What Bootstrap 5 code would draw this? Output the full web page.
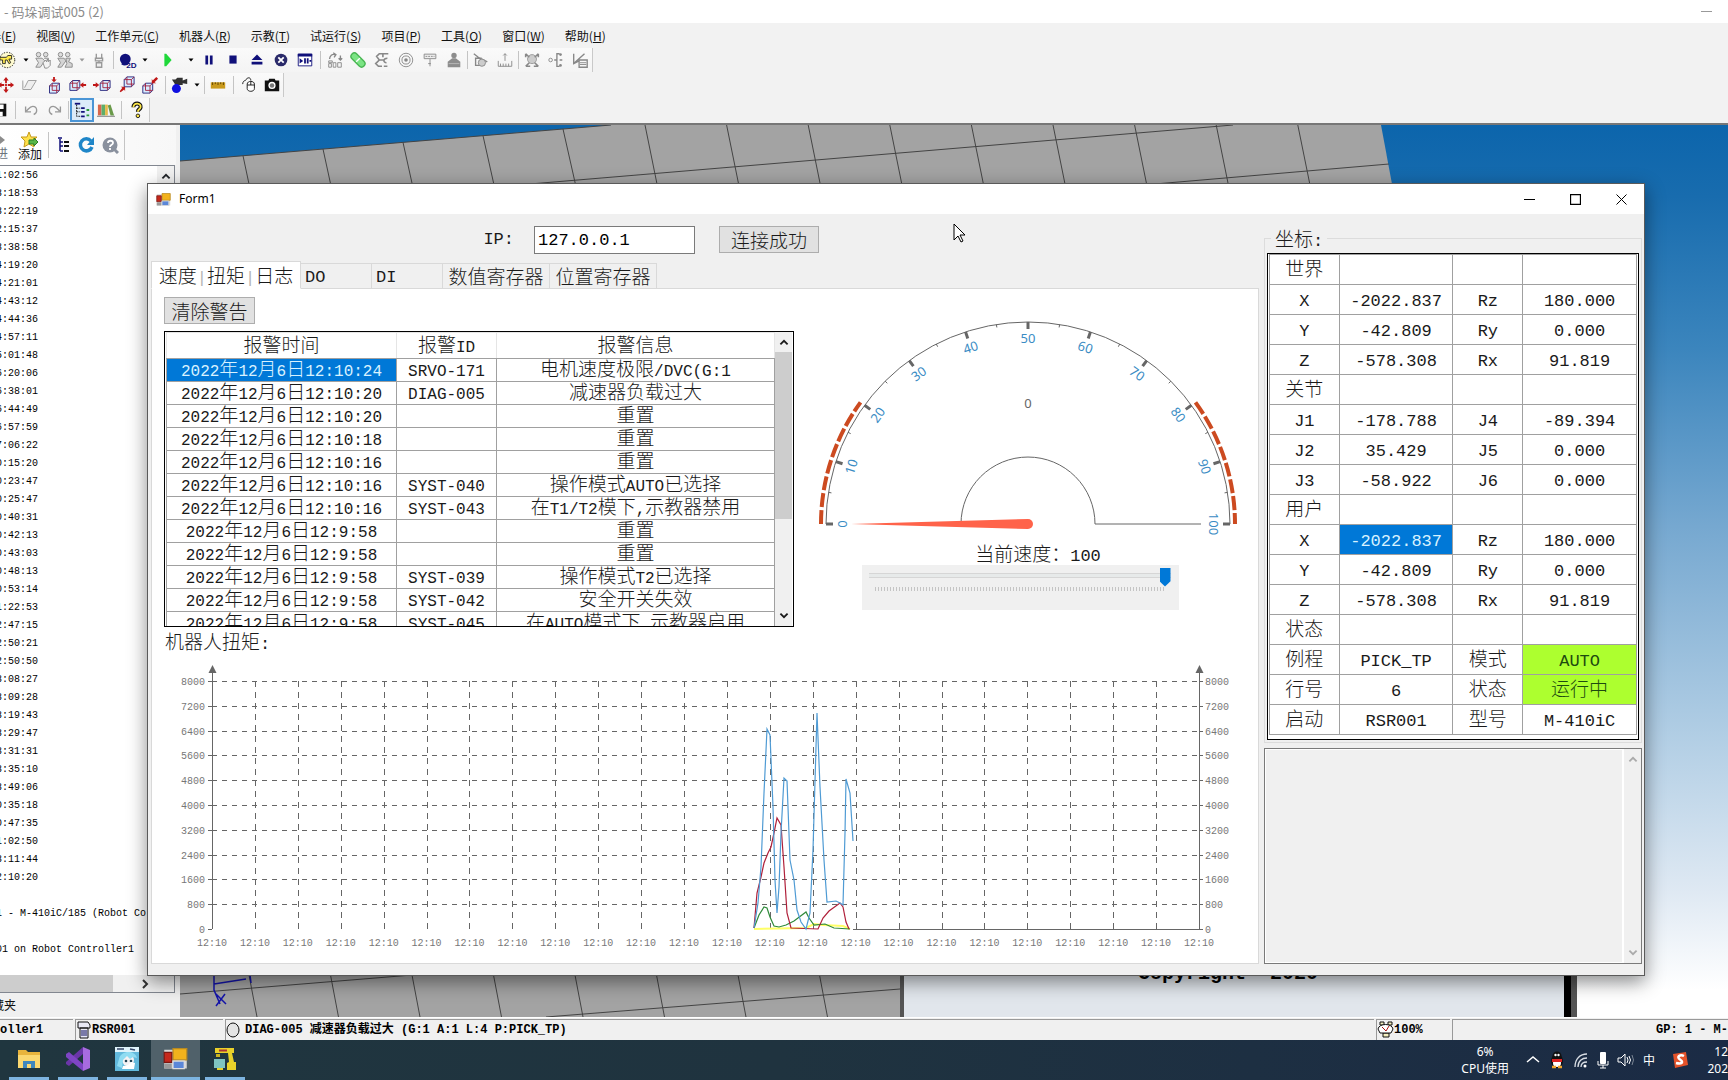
<!DOCTYPE html>
<html lang="zh-CN">
<head>
<meta charset="utf-8">
<meta name="viewport" content="width=device-width, initial-scale=1">
<title>Form1</title>
<link href="https://cdn.jsdelivr.net/npm/bootstrap@5.3.0/dist/css/bootstrap.min.css" rel="stylesheet">
<style>
:root{--sim:"Liberation Mono","Noto Sans CJK SC",monospace;--cjk:"Noto Sans CJK SC",sans-serif;--ui:"Noto Sans","Noto Sans CJK SC",sans-serif}
body{font-family:var(--cjk);font-size:12px;color:#111;height:100vh;overflow:hidden;background:#f2f2f2}
button{font:inherit;color:inherit;background:none;border:0;padding:0}
svg{display:block;flex:none}
/* host application */
.app-title{height:23px;color:#8c8c8c;font-size:13px;line-height:20px;background:#fff}
.app-menu{height:25px;gap:20px;margin-left:-11px;font-size:12px}
.tool-strip{width:max-content;height:24px;margin-bottom:1px;background:linear-gradient(#fafafa,#f4f4f4);border-right:1px solid #c9c9c9}
.tb{width:24px;height:24px;display:flex;align-items:center;justify-content:center}
.tb.narrow{width:22px}.tb.wide{width:34px}
.tb.drop{width:12px}
.tb.on{border:2px solid #4a95d6;background:#dcecf9}
.vsep{width:1px;height:18px;background:#c4c4c4;margin:0 3px}
.vsep.tight{margin:0 1px}
.app-line{border-top:2px solid #777}
.side{width:180px;background:#f0f0f0;border-right:4px solid #f0f0f0}
.side-tools{height:40px;background:linear-gradient(90deg,#fff,#f7f7f7)}
.log-box{border:1px solid #828790;border-left:0;background:#fff;margin-right:1px}
.log-list{font:10px/18px var(--sim);color:#000;margin-left:-4px;padding-top:1px;white-space:pre}
.vbar{width:17px;background:#f0f0f0}
.hbar{height:17px;background:#f0f0f0}
.hbar-thumb{width:65%;background:#cdcdcd}
.side-tab{height:24px;font-size:12px}
.status{height:23px;background:#f0f0f0;border-top:1px solid #fff;font:bold 12px/20px var(--sim);color:#000;white-space:nowrap}
.pane-cell{border-top:1px solid #999;border-left:1px solid #999;height:21px;margin-right:2px}
.taskbar{height:40px;background:linear-gradient(90deg,#20363f,#1f333f 45%,#1b2b45);color:#fff;font:12px/17px var(--ui)}
.task{width:49px;height:40px;padding:0 4px 0 5px}
.task span{display:flex;align-items:center;justify-content:center;height:40px;border-bottom:3px solid #7db4e0}
.task.now{background:#50616a;padding:0}
/* monitor form */
.form-win{left:147px;right:83px;top:183px;border:1px solid #5a5a5a;background:#f0f0f0;box-shadow:0 6px 18px rgba(0,0,0,.45);font:300 19px/24px var(--cjk);color:#1a1a1a}
.form-title{height:30px;background:#fff;font:12px/30px var(--ui);color:#000}
.cap{width:46px;height:30px;display:flex;align-items:center;justify-content:center}
.lat{font-family:var(--sim);font-size:17px;font-weight:400}
span.lat{line-height:0}
.form-body{gap:5px;padding:0 3px 11px}
.ip-bar{height:47px;padding:12px 0 0 30%}
.ip-bar label{padding-top:2px}
.ip-box{width:161px;height:28px;margin-left:20px;border:1px solid #7a7a7a;border-radius:0;padding:0 3px;background:#fff}
.win-btn{height:27px;border:1px solid #adadad;background:#e1e1e1;line-height:24px;padding:0 6px;font-size:19px}
.tab-list{height:28px;margin-bottom:-1px;position:relative;align-items:flex-end}
.tab-list button{height:26px;border:1px solid #d9d9d9;border-left-width:0;line-height:24px;padding:0 4px;text-align:left;white-space:nowrap}
.tab-list button.now{height:28px;width:150px;background:#fff;border-left-width:1px;border-bottom-color:#fff;padding:0 6px;font-size:19px;text-align:center}
.tab-list .short{width:71px;line-height:28px}
.tab-list .long{width:107px;text-align:center}
.bar-mark{color:#b5b5b5}
.page{background:#fff;border:1px solid #d9d9d9}
.page-label{padding:2px 0 2px 13px}
.alarm-col{width:630px;margin-left:12px;padding-top:8px}
.grid-frame{border:1px solid #000;background:#fff;padding:0 1px}
.alarm-frame{height:296px;margin-top:7px;overflow:hidden}
.table.dgv{table-layout:fixed;margin:0;color:#1a1a1a;font-weight:300;border-color:#a0a0a0}
.table.dgv>:not(caption)>*>*{padding:0;border:1px solid #a0a0a0;text-align:center;vertical-align:top;white-space:nowrap;overflow:hidden;font-weight:300}
.table.alarm>:not(caption)>*>*{height:23px;line-height:18px;font-size:19px}
.table.alarm>thead>*>*{height:26px;line-height:22px;border-color:#e5e5e5;border-bottom-color:#a0a0a0}
.alarm .lat{font-size:16px}
.table.coord>:not(caption)>*>*{height:30px;line-height:26px}
.table.dgv .sel{background:#0078d7;color:#d8f2ff}
.table.dgv .go{background:#adff2f;color:#1d4a10}
.scroll-col{width:17px;background:#f0f0f0}
.scroll-thumb{height:167px;background:#cdcdcd}
.speed{width:317px;height:45px;background:#f0f0f0;margin-right:12px}
.speed input{appearance:none;-webkit-appearance:none;display:block;width:302px;height:20px;margin:2px 0 0 7px;background:linear-gradient(#d6d6d6,#d6d6d6) 0 6px/100% 1px no-repeat,linear-gradient(#e7eaea,#e7eaea) 0 7px/100% 3px no-repeat,linear-gradient(#d6d6d6,#d6d6d6) 0 10px/100% 1px no-repeat}
.speed input::-webkit-slider-thumb{-webkit-appearance:none;width:11px;height:19px;background:#0078d7;clip-path:polygon(0 0,100% 0,100% 72%,50% 100%,0 72%)}
.ticks{height:4px;margin:0 13px;width:291px;background:repeating-linear-gradient(90deg,#c4c4c4 0 1px,transparent 1px 3px)}
.right-col{width:378px}
.coord-set{border:1px solid #dcdcdc;margin:12px 0 5px;padding:0 2px 2px}
.coord-set legend{float:none;width:auto;font-size:19px;line-height:24px;padding:0 4px;margin:0 0 3px 4px}
.coord-frame{padding-bottom:4px}
.msg{height:216px;border:1px solid #7a7a7a}
.msg textarea{border:1px solid #fff;background:#f0f0f0;resize:none;outline:0}
.msg .scroll-col{width:18px;border-left:1px solid #fff}
.pointer{left:953px;top:223px}
svg .axis{font:10px var(--sim);fill:#777}
svg .dial{font:13px var(--ui);fill:#3a8cc4;text-anchor:middle}
</style>
<script src="https://cdn.jsdelivr.net/npm/bootstrap@5.3.0/dist/js/bootstrap.bundle.min.js"></script>
</head>
<body class="d-flex flex-column position-relative">

<svg width="0" height="0" class="position-absolute" aria-hidden="true">
<defs>
<symbol id="i-drop" viewBox="0 0 20 20"><path d="M5 7h10l-5 6z" fill="#000"/></symbol>
<symbol id="i-dropg" viewBox="0 0 20 20"><path d="M5 7h10l-5 6z" fill="#999"/></symbol>
<symbol id="i-teach" viewBox="0 0 20 20"><circle cx="9" cy="10" r="8.500" fill="#fffbd0" stroke="#000" stroke-dasharray="1.500 1.500"/><path d="M1 7h7l2-2h4v4h-3l2 4-2 1-2-4H7v4H4v-4H1z" fill="#ffe94a" stroke="#222"/></symbol>
<symbol id="i-people" viewBox="0 0 20 20"><circle cx="5" cy="4" r="2.500" fill="#ddd" stroke="#888"/><circle cx="13" cy="4" r="2.500" fill="#ddd" stroke="#888"/><path d="M2 8h7l3 3-5 7H2l3-5zM11 8h5v3" fill="#ddd" stroke="#888"/><path d="M10 13l3-3 1 2 1-3 1 3 2-2v6l-3 3h-3z" fill="#f4f4f4" stroke="#888"/></symbol>
<symbol id="i-people2" viewBox="0 0 20 20"><circle cx="5" cy="4" r="2.500" fill="#ddd" stroke="#888"/><circle cx="13" cy="4" r="2.500" fill="#ddd" stroke="#888"/><path d="M2 8h7l2 3-5 7H2l3-5zM11 8h5l-2 4 4 2v4h-8l2-4z" fill="#d4d4d4" stroke="#888"/></symbol>
<symbol id="i-clamp" viewBox="0 0 20 20"><path d="M7 3v5M13 3v5M6 8h8v3H6zM10 11v2M7 13h6v5H7z" fill="#eee" stroke="#999" stroke-width="1.500"/></symbol>
<symbol id="i-ball" viewBox="0 0 20 20"><circle cx="7" cy="9" r="6" fill="#10107a"/><path d="M3 14c3 2 6 1 8-1" stroke="#10107a" fill="none" stroke-width="2"/><text x="8" y="19" font-size="9" font-family="Liberation Sans" font-weight="bold" fill="#10107a">2D</text></symbol>
<symbol id="i-play" viewBox="0 0 20 20"><path d="M6 3h2l6 7-6 7H6z" fill="#1fd83a"/></symbol>
<symbol id="i-pause" viewBox="0 0 20 20"><path d="M6 5h3v10H6zM11 5h3v10h-3z" fill="#10107a"/></symbol>
<symbol id="i-stop" viewBox="0 0 20 20"><path d="M6 5h8v9H6z" fill="#10107a"/></symbol>
<symbol id="i-eject" viewBox="0 0 20 20"><path d="M10 4l6 6H4zM4 12h12v3H4z" fill="#10107a"/></symbol>
<symbol id="i-kill" viewBox="0 0 20 20"><circle cx="10" cy="10" r="7" fill="#2a2a6a"/><path d="M7 7l6 6M13 7l-6 6" stroke="#fff" stroke-width="2"/></symbol>
<symbol id="i-step" viewBox="0 0 20 20"><path d="M2.500 3.500h15v13h-15z" fill="#fff" stroke="#10107a"/><path d="M2 3h16v3H2zM4 8l4 3-4 3zM9 8h2v6H9zM12 8h2v6h-2zM15 10h2v2h-2z" fill="#10107a"/></symbol>
<symbol id="i-parts" viewBox="0 0 20 20"><path d="M4 9c0-4 3-6 6-5M8 2l3 2-2 3M16 5v4M14 8l2 2 2-2" fill="none" stroke="#888" stroke-width="1.500"/><path d="M3 11h4v2H3zM3 14h3v4H3zM8 13h3v5H8zM13 13h4v5h-4z" fill="none" stroke="#888"/></symbol>
<symbol id="i-chain" viewBox="0 0 20 20"><path d="M6 6l8 8" stroke="#49b553" stroke-width="9" stroke-linecap="round"/><path d="M6 6l8 8" stroke="#7be484" stroke-width="6" stroke-linecap="round"/><path d="M8 12l4-4" stroke="#fff" stroke-width="1.500"/></symbol>
<symbol id="i-arm" viewBox="0 0 20 20"><path d="M17 3H7L4 6l3 4h5M7 10l-4 4 3 3h4M16 8c-5 0-5 5-1 5M16 17h-4M11 3v4" fill="none" stroke="#888" stroke-width="1.800"/></symbol>
<symbol id="i-target" viewBox="0 0 20 20"><g fill="none" stroke="#888"><circle cx="10" cy="10" r="7.500"/><circle cx="10" cy="10" r="4.500"/></g><circle cx="10" cy="10" r="2" fill="#888"/></symbol>
<symbol id="i-board" viewBox="0 0 20 20"><path d="M3.500 3.500h13v5h-13zM10 9v8M8 14h3" fill="#eee" stroke="#888"/><path d="M5 6h10" stroke="#888" stroke-dasharray="2 1"/></symbol>
<symbol id="i-man" viewBox="0 0 20 20"><circle cx="10" cy="5" r="3" fill="#8d8d8d"/><path d="M8 8h4l5 4v6H3v-6z" fill="#8d8d8d"/><path d="M4 14h12" stroke="#bbb"/></symbol>
<symbol id="i-shape" viewBox="0 0 20 20"><path d="M2 3l5 4 10 5M4 8h6v8H4z" fill="none" stroke="#888" stroke-width="1.500"/><circle cx="11" cy="13" r="4" fill="#ccc" stroke="#888"/></symbol>
<symbol id="i-gauge" viewBox="0 0 20 20"><path d="M2.500 11v6h15v-6M5 14v3M8 14v3M11 14v3M14 14v3M10 11V3M8 5l2-2 2 2" fill="none" stroke="#888"/></symbol>
<symbol id="i-net" viewBox="0 0 20 20"><circle cx="10" cy="9" r="5" fill="#ccc" stroke="#999"/><path d="M3 3l4 4M17 3l-4 4M3 17l4-4M17 17l-4-4M3 3v4M17 3v4M3 17h5M17 17h-5" stroke="#888" stroke-width="1.800" fill="none"/></symbol>
<symbol id="i-link" viewBox="0 0 20 20"><circle cx="4" cy="10" r="2" fill="none" stroke="#888"/><path d="M8 10h3M14 3h-3v14h3M14 10h3" fill="none" stroke="#888" stroke-width="1.500"/><circle cx="15" cy="4" r="1.500" fill="#888"/><circle cx="15" cy="16" r="1.500" fill="#888"/></symbol>
<symbol id="i-plot" viewBox="0 0 20 20"><path d="M3 3v11l6-3M3 14L15 3M9 10h9v8H9z" fill="none" stroke="#888" stroke-width="1.500"/><path d="M10 13h7M10 15h7" stroke="#888"/></symbol>
<symbol id="i-move" viewBox="0 0 20 20"><path d="M10 1l3 4h-2v3H9V5H7zM10 19l3-4h-2v-3H9v3H7zM1 10l4-3v2h3v2H5v2zM19 10l-4-3v2h-3v2h3v2z" fill="#c01818"/><path d="M9 9h2v2H9z" fill="#c01818"/></symbol>
<symbol id="i-plane" viewBox="0 0 20 20"><path d="M2 5v10h9l6-10H8l-4 8" fill="#eee" stroke="#999"/></symbol>
<symbol id="i-cube" viewBox="0 0 20 20"><path d="M5 9l3-3h8v8l-3 3H5z" fill="#d8ecff" stroke="#22227a"/><path d="M5 9h8v8M13 9l3-3M8 6v8h8" fill="none" stroke="#a02040"/></symbol>
<symbol id="i-c1" viewBox="0 0 20 20"><use href="#i-cube" y="2"/><path d="M10 7l-3-3h2V1h2v3h2z" fill="#c01818"/></symbol>
<symbol id="i-c2" viewBox="0 0 20 20"><use href="#i-cube" x="-4" y="-1"/><path d="M12 10l4-3v2h3v2h-3v2z" fill="#c01818"/></symbol>
<symbol id="i-c3" viewBox="0 0 20 20"><use href="#i-cube" x="3" y="-1"/><path d="M7 10L3 7v2H0v2h3v2z" fill="#c01818"/></symbol>
<symbol id="i-c4" viewBox="0 0 20 20"><use href="#i-cube" x="3" y="-5"/><path d="M9 12v5l-1-2-4 3-1-1 3-4-2-1z" fill="#c01818"/></symbol>
<symbol id="i-c5" viewBox="0 0 20 20"><use href="#i-cube" x="-3" y="2"/><path d="M12 8V3l1 2 4-4 2 2-4 4 2 1z" fill="#c01818"/></symbol>
<symbol id="i-view" viewBox="0 0 20 20"><path d="M1 4h4l2-2h6v3l5-2v6l-5-1v2H5z" fill="#333"/><circle cx="6" cy="14" r="5" fill="#1010e0"/></symbol>
<symbol id="i-ruler" viewBox="0 0 20 20"><path d="M2 7h16v7H2z" fill="#c99a1c"/><path d="M4 7v3M7 7v2M10 7v3M13 7v2M16 7v3" stroke="#5a4000"/></symbol>
<symbol id="i-mouse" viewBox="0 0 20 20"><path d="M8 9c0-4 8-4 8 0v5c0 4-8 4-8 0zM8 10h8M12 6v4" fill="#fff" stroke="#111"/><path d="M3 9c0-3 2-4 3-4 2-4 6-4 6 0" fill="none" stroke="#111"/></symbol>
<symbol id="i-photo" viewBox="0 0 20 20"><path d="M2 5h4l1-2h6l1 2h4v12H2z" fill="#111"/><circle cx="10" cy="10.500" r="4" fill="#fff"/><circle cx="10" cy="10.500" r="2.500" fill="#777"/></symbol>
<symbol id="i-save" viewBox="0 0 20 20"><path d="M3 3h14v14H3z" fill="#111"/><path d="M6 4h8v5H6zM7 12h6v5H7z" fill="#fff"/><path d="M8 13h2v3H8z" fill="#111"/></symbol>
<symbol id="i-undo" viewBox="0 0 20 20"><path d="M13 15c5-2 4-9-1-9-3 0-4 2-7 5M4 6v6h6" fill="none" stroke="#999" stroke-width="1.500"/></symbol>
<symbol id="i-redo" viewBox="0 0 20 20"><path d="M7 15c-5-2-4-9 1-9 3 0 4 2 7 5M16 6v6h-6" fill="none" stroke="#999" stroke-width="1.500"/></symbol>
<symbol id="i-tree" viewBox="0 0 20 20"><path d="M2 2h6v2H2z" fill="#10107a"/><path d="M4 4v13h4M4 8h4M4 12h4" stroke="#111" fill="none" stroke-dasharray="2 1"/><path d="M9 7h4v2H9zM9 11h4v2H9zM9 16h4v2H9z" fill="#10107a"/><path d="M15 9h3v2h-3zM15 15h3v2h-3z" fill="#2a9a3a"/></symbol>
<symbol id="i-books" viewBox="0 0 20 20"><path d="M1 4h4v12H1z" fill="#d9674c"/><path d="M5 4h4v12H5z" fill="#5fae6a"/><path d="M9 4h3v12H9z" fill="#e7b94a"/><path d="M12 5l3-1 4 12h-4z" fill="#6a9a4a"/><path d="M0 17h20" stroke="#777"/></symbol>
<symbol id="i-ask" viewBox="0 0 20 20"><path d="M6 7c0-6 9-5 8 0-1 3-3 2-3 5" stroke="#111" stroke-width="4.500" fill="none"/><path d="M6 7c0-6 9-5 8 0-1 3-3 2-3 5" stroke="#ffe94a" stroke-width="2" fill="none"/><circle cx="11" cy="16.500" r="2" fill="#ffe94a" stroke="#111"/></symbol>
<symbol id="i-form" viewBox="0 0 20 20"><path d="M1 3h18v15H1z" fill="#d8d8d8"/><path d="M8 2h11v9H8z" fill="#f2b21c" stroke="#b98a20"/><path d="M1 5h6v8H1z" fill="#c5281c" stroke="#7d1710"/><path d="M8 12h9v6H8z" fill="#5b87d8" stroke="#ddd"/><path d="M1 14h6v4H1z" fill="#999"/></symbol>
<symbol id="i-up" viewBox="0 0 10 10"><path d="M2 7l3-3 3 3" fill="none" stroke="currentColor" stroke-width="1.500"/></symbol>
<symbol id="i-down" viewBox="0 0 10 10"><path d="M2 3l3 3 3-3" fill="none" stroke="currentColor" stroke-width="1.500"/></symbol>
</defs>
</svg>

<header>
  <div class="app-title d-flex align-items-center justify-content-between">
    <span class="ps-1">- 码垛调试005 (2)</span>
    <button class="pe-3" aria-label="最小化"><svg width="11" height="11"><path d="M0 5.500h11" stroke="#999"/></svg></button>
  </div>
  <nav class="app-menu d-flex align-items-center text-nowrap">
    <button>器(<u>E</u>)</button><button>视图(<u>V</u>)</button><button>工作单元(<u>C</u>)</button><button>机器人(<u>R</u>)</button><button>示教(<u>T</u>)</button><button>试运行(<u>S</u>)</button><button>项目(<u>P</u>)</button><button>工具(<u>O</u>)</button><button>窗口(<u>W</u>)</button><button>帮助(<u>H</u>)</button>
  </nav>
  <div id="strips"></div>
</header>

<main class="app-line d-flex flex-grow-1" style="min-height:0">
  <aside class="side d-flex flex-column flex-shrink-0 overflow-hidden">
    <div class="side-tools d-flex align-items-center">
      <button class="text-secondary overflow-hidden d-flex flex-column align-items-end" style="width:8px"><svg width="8" height="16" viewBox="0 0 8 16"><path d="M0 5l5 4-5 4z" fill="#8c8c8c"/></svg><span class="lh-1">进</span></button>
      <button class="ms-2" style="width:28px"><svg class="mx-auto" width="18" height="17" viewBox="0 0 18 17"><path d="M8 1l2 5h6l-4 4 1 6-5-3-5 3 1-6-4-4h6z" fill="#ffe14a" stroke="#c69a1c"/><path d="M8 9h5V7l4 4-4 4v-2H8z" fill="#57b648" stroke="#2d7c28"/></svg><span class="d-block lh-1">添加</span></button>
      <span class="vsep me-1 ms-1" style="height:26px"></span>
      <button class="tb narrow" aria-label="树"><svg width="14" height="16" viewBox="0 0 14 16"><path d="M1 1h4M3 2v12M3 5h3M3 9h3M3 14h3" stroke="#10107a" stroke-width="1.500"/><path d="M7 5h5M7 9h5M7 14h5" stroke="#111" stroke-width="2"/></svg></button>
      <button class="tb" aria-label="刷新"><svg width="18" height="18" viewBox="0 0 18 18"><path d="M14 11a6 6 0 1 1-1-6" fill="none" stroke="#1f86c8" stroke-width="3.500"/><path d="M16 1v8H9z" fill="#1f86c8"/></svg></button>
      <button class="tb narrow" aria-label="帮助"><svg width="17" height="17" viewBox="0 0 17 17"><circle cx="8" cy="8" r="7.500" fill="#8a919e"/><path d="M12 12l4 4" stroke="#8a919e" stroke-width="3"/><path d="M6 6c0-3 5-3 5 0 0 2-3 1.500-3 4M8 11v2" stroke="#fff" stroke-width="1.800" fill="none"/></svg></button>
      <span class="vsep" style="height:30px"></span>
    </div>
    <div class="log-box d-flex flex-column flex-grow-1" style="min-height:0">
      <div class="d-flex flex-grow-1 overflow-hidden">
        <div id="log" class="log-list flex-grow-1 overflow-hidden"></div>
        <div class="vbar pt-1 text-dark"><svg class="mx-auto" width="12" height="12"><use href="#i-up"/></svg></div>
      </div>
      <div class="hbar d-flex align-items-center"><div class="hbar-thumb h-100"></div><svg class="ms-auto me-4" width="9" height="12" viewBox="0 0 9 12"><path d="M2 2l4 4-4 4" fill="none" stroke="#333" stroke-width="2"/></svg></div>
    </div>
    <div class="side-tab d-flex align-items-center"><span style="margin-left:-8px">藏夹</span></div>
  </aside>
  <svg class="flex-grow-1 flex-shrink-1 h-100" style="width:0" viewBox="180 125 1548 892" preserveAspectRatio="none">
    <defs>
      <linearGradient id="sky" x1="0" y1="0" x2="0" y2="1"><stop offset="0" stop-color="#0c65ac"/><stop offset=".08" stop-color="#186cae"/><stop offset=".25" stop-color="#3b85bd"/><stop offset=".45" stop-color="#76a8d0"/><stop offset=".68" stop-color="#b0cde4"/><stop offset=".86" stop-color="#dfe9f3"/><stop offset=".97" stop-color="#fff"/></linearGradient>
    </defs>
    <path d="M180 125h1548v892H180z" fill="url(#sky)"/>
    <path d="M180 161L611 125H1381L1392 184L1400 400V1017H180z" fill="#a3a3a3"/>
    <g stroke="#444" fill="none" id="mesh"></g>
    <path d="M214 975v15l6 14M214 984l32-5M250 975l1 8M216 994l10 10M225 994l-9 12" stroke="#1414a8" fill="none" stroke-width="1.500"/>
    <path d="M902 700h662v317H902z" fill="#e1e6ec"/><path d="M900 700h4v317h-4z" fill="#555"/>
    <path d="M1564 700h7v317h-7z"/><path d="M1571 700h6v317h-6z" fill="#555"/>
    <text x="1138" y="979" font-family="Liberation Mono" font-weight="bold" font-size="20" xml:space="preserve">Copyright  2020</text>
  </svg>
</main>

<footer>
  <div class="status d-flex align-items-center overflow-hidden">
    <div class="pane-cell border-start-0" style="width:73px">oller1</div>
    <div class="pane-cell d-flex align-items-center" style="width:148px"><svg width="16" height="18" viewBox="0 0 16 18"><path d="M2 1h10l2 3v3H2zM4 7h8v10H4z" fill="#e8e8f4" stroke="#111"/><path d="M5 9h6v6H5z" fill="#7a7aa8"/></svg><span>RSR001</span></div>
    <div class="pane-cell d-flex align-items-center flex-grow-1"><svg width="15" height="16" viewBox="0 0 15 16"><ellipse cx="7" cy="8" rx="6" ry="7" fill="#e4e4e4" stroke="#111"/></svg><span class="ms-1">DIAG-005 减速器负载过大 (G:1 A:1 L:4 P:PICK_TP)</span></div>
    <div class="pane-cell d-flex align-items-center" style="width:74px"><svg width="17" height="17" viewBox="0 0 17 17"><path d="M3 1h4v3H3zM11 1h4v3h-4zM6 12h6v4H6z" fill="#f4efc0" stroke="#111"/><path d="M1 8c1-6 14-6 15 0l-2 4H3z" fill="#fff" stroke="#111"/><path d="M5 6l4 4 3-5" stroke="#a11" fill="none"/></svg><span>100%</span></div>
    <div class="pane-cell text-end m-0 text-nowrap" style="width:276px">GP: 1 - M-</div>
  </div>
  <div class="taskbar d-flex align-items-center overflow-hidden">
    <div class="d-flex ps-1 me-auto">
      <button class="task" aria-label="资源管理器"><span><svg width="24" height="22" viewBox="0 0 24 22"><path d="M1 2h8l2 2h12v16H1z" fill="#e8b43c"/><path d="M1 7h22v13H1z" fill="#fbd870"/><path d="M6 20v-7h12v7h-4v-4h-4v4z" fill="#3f87bd"/></svg></span></button>
      <button class="task" aria-label="Visual Studio"><span><svg width="26" height="26" viewBox="0 0 26 26"><path d="M18 1l7 3v18l-7 3z" fill="#a76be0"/><path d="M18 1v7L4 20l-3-2V16z" fill="#6a35a8"/><path d="M18 25v-7L4 6 1 8v3z" fill="#7e45c4"/></svg></span></button>
      <button class="task" aria-label="播放器"><span><svg width="24" height="24" viewBox="0 0 24 24"><path d="M0 0h24v24H0z" fill="#62b9dc"/><path d="M0 0h24v5H0z" fill="#dff3fb"/><path d="M2 2h7M15 2l5 1" stroke="#346" stroke-width="1.500"/><circle cx="13" cy="13" r="6" fill="#f4f2f4"/><path d="M4 12c2-9 16-9 18-1l-4-1-3 2-3-3-4 4-1 8-5-2z" fill="#8fdcf2"/><circle cx="11" cy="14" r="1.300" fill="#245"/><circle cx="16" cy="14" r="1.300" fill="#245"/><path d="M8 19l5-1 3-3 4 1-1 6H7z" fill="#fff"/></svg></span></button>
      <button class="task now" aria-label="Form1"><span><svg width="25" height="25"><use href="#i-form"/></svg></span></button>
      <button class="task" aria-label="ROBOGUIDE"><span><svg width="24" height="24" viewBox="0 0 24 24"><path d="M2 1h19v5h-2l2 9h2v8h-9v-7l2-1-1-9H2z" fill="#e9d22a"/><path d="M6 3.500h8" stroke="#a33" stroke-width="2"/><path d="M3 7h4v3H3z" fill="#c9b420"/><path d="M1 12h11v9H1z" fill="#7fc4c0"/><path d="M4 21h6v2H4z" fill="#e9d22a"/></svg></span></button>
    </div>
    <div class="text-center text-nowrap me-3">6%<br>CPU使用</div>
    <svg width="16" height="16" viewBox="0 0 16 16"><path d="M2 10l6-5 6 5" fill="none" stroke="#fff" stroke-width="1.500"/></svg>
    <svg class="ms-2" width="16" height="18" viewBox="0 0 16 18"><ellipse cx="8" cy="10" rx="6" ry="7" fill="#111"/><circle cx="8" cy="5" r="4.500" fill="#111"/><ellipse cx="8" cy="12" rx="4" ry="4" fill="#fff"/><path d="M3 8h10v3H3z" fill="#d22"/><circle cx="6.500" cy="4" r="1.200" fill="#fff"/><circle cx="9.500" cy="4" r="1.200" fill="#fff"/><path d="M3 16h4M9 16h4" stroke="#f2a52c" stroke-width="2.500"/></svg>
    <svg class="ms-2" width="16" height="16" viewBox="0 0 16 16"><g fill="none" stroke="#d8dde4" stroke-width="1.300"><path d="M2 15C2 7 7 2 14 2M5 15c0-6 4-9 9-9M8 15c0-3 2-5 6-5"/></g><circle cx="12" cy="14" r="1.500" fill="#fff"/></svg>
    <svg class="ms-2" width="12" height="17" viewBox="0 0 12 17"><rect x="3" y="0" width="6" height="12" rx="1" fill="#fff"/><path d="M1 9v4h10V9M6 13v3M3 16h6" fill="none" stroke="#fff"/></svg>
    <svg class="ms-2" width="18" height="16" viewBox="0 0 18 16"><path d="M1 6h3l4-4v12l-4-4H1zM10 5q2 3 0 6M12 4q3 4 0 8" fill="none" stroke="#fff"/><path d="M15 3q3 5 0 10" fill="none" stroke="#7a8594"/></svg>
    <span class="ms-2">中</span>
    <svg class="ms-3" width="18" height="18" viewBox="0 0 18 18"><path d="M2 3l13-2 2 13-13 3z" fill="#e5532a"/><path d="M13 5c-4-2-8 1-4 3.500s2 5-4 3.500" fill="none" stroke="#fff" stroke-width="2.500"/></svg>
    <div class="ms-3 text-end text-nowrap overflow-hidden" style="width:23px">12<br>202</div>
  </div>
</footer>

<section class="form-win position-absolute">
  <div class="form-title d-flex align-items-center">
    <svg class="ms-2" width="15" height="15"><use href="#i-form"/></svg><span class="ms-2 me-auto">Form1</span>
    <button class="cap" aria-label="最小化"><svg width="11" height="11"><path d="M0 5.500h11" stroke="#000"/></svg></button>
    <button class="cap" aria-label="最大化"><svg width="11" height="11"><path d="M.5.500h10v10H.5z" fill="none" stroke="#000" stroke-width="1.300"/></svg></button>
    <button class="cap" aria-label="关闭"><svg width="11" height="11"><path d="M.5.500l10 10M10.500.500l-10 10" stroke="#000"/></svg></button>
  </div>
  <div class="form-body d-flex">
    <div class="flex-grow-1 d-flex flex-column">
      <div class="ip-bar d-flex align-items-start">
        <label class="lat" for="ip">IP:</label>
        <input id="ip" class="ip-box lat" type="text" value="127.0.0.1">
        <button class="win-btn ms-4" style="width:100px">连接成功</button>
      </div>
      <div class="tab-list d-flex" role="tablist">
        <button class="now" role="tab" aria-selected="true">速度<span class="lat bar-mark">|</span>扭矩<span class="lat bar-mark">|</span>日志</button>
        <button class="lat short" role="tab">DO</button><button class="lat short" role="tab">DI</button>
        <button class="long" role="tab">数值寄存器</button><button class="long" role="tab">位置寄存器</button>
      </div>
      <div class="page flex-grow-1">
        <div class="d-flex">
          <div class="alarm-col flex-shrink-0">
            <button class="win-btn" style="width:91px">清除警告</button>
            <div class="grid-frame alarm-frame d-flex">
              <table class="table dgv alarm"><colgroup><col style="width:230px"><col style="width:100px"><col></colgroup>
                <thead><tr><th>报警时间</th><th>报警<span class="lat">ID</span></th><th>报警信息</th></tr></thead><tbody id="alarms"></tbody></table>
              <div class="scroll-col d-flex flex-column flex-shrink-0 align-items-center pb-1">
                <svg class="my-1" width="12" height="12"><use href="#i-up"/></svg><div class="scroll-thumb w-100"></div><svg class="mt-auto" width="12" height="12"><use href="#i-down"/></svg>
              </div>
            </div>
          </div>
          <div class="flex-grow-1 d-flex flex-column align-items-center">
            <svg id="dial" viewBox="0 0 464 252" width="464" height="252"></svg>
            <label for="spd" class="ps-4">当前速度：<span class="lat">100</span></label>
            <div class="speed"><input id="spd" type="range" min="0" max="100" value="100"><div class="ticks"></div></div>
          </div>
        </div>
        <div class="page-label">机器人扭矩<span class="lat">:</span></div>
        <svg id="torque" class="w-100" viewBox="152 655 1106 302"></svg>
      </div>
    </div>
    <div class="right-col flex-shrink-0">
      <fieldset class="coord-set"><legend>坐标<span class="lat">:</span></legend>
        <div class="grid-frame coord-frame"><table class="table dgv coord"><colgroup><col style="width:19%"><col style="width:31%"><col style="width:19%"><col></colgroup><tbody id="coords"></tbody></table></div>
      </fieldset>
      <div class="msg d-flex"><textarea class="flex-grow-1" aria-label="消息" readonly></textarea>
        <div class="scroll-col d-flex flex-column justify-content-between align-items-center py-1" style="color:#aaa"><svg width="12" height="12"><use href="#i-up"/></svg><svg width="12" height="12"><use href="#i-down"/></svg></div></div>
    </div>
  </div>
</section>
<svg class="pointer position-absolute" width="14" height="21" viewBox="0 0 14 21"><path d="M1 1v16l4-4 3 6 2-1-3-6h5z" fill="#fff" stroke="#000"/></svg>

<script>
const $ = id => document.getElementById(id);
/* toolbars: d/g = drop arrow, | and ! = separators, suffix -n narrow, -w wide, -on pressed */
const strips = [
 ['m4','teach','d','people-n','people2-n','g','clamp-n','|','ball-n','d','play-w','d','pause','stop','eject','kill','step','|','parts-n','chain','arm','target','board','man','!','shape','gauge','!','net','link','plot'],
 ['m6','move','plane','c1','c2','c3','c4','c5','|','view-n','d','!','ruler','|','mouse','photo-n'],
 ['m12','save','|','undo','redo','!','tree-on','books','|','ask']];
$('strips').innerHTML = strips.map(r => `<div class="tool-strip d-flex align-items-center" style="margin-left:-${r[0].slice(1)}px">` + r.slice(1).map(k => {
  if (k === '|' || k === '!') return `<span class="vsep${k === '!' ? ' tight' : ''}"></span>`;
  if (k === 'd' || k === 'g') return `<button class="tb drop" aria-label="更多"><svg width="10" height="10"><use href="#i-drop${k === 'g' ? 'g' : ''}"/></svg></button>`;
  const [n, m] = k.split('-');
  return `<button class="tb ${{n:'narrow',w:'wide',on:'on'}[m] || ''}" aria-label="${n}"><svg width="18" height="18"><use href="#i-${n}"/></svg></button>`;
}).join('') + '</div>').join('');

$('log').textContent = ('1:02:56,3:18:53,3:22:19,2:15:37,3:38:58,4:19:20,4:21:01,4:43:12,4:44:36,4:57:11,5:01:48,6:20:06,6:38:01,6:44:49,6:57:59,7:06:22,0:15:20,0:23:47,0:25:47,0:40:31,0:42:13,0:43:03,0:48:13,0:53:14,1:22:53,2:47:15,2:50:21,2:50:50,3:08:27,3:09:28,3:19:43,3:29:47,3:31:31,3:35:10,3:49:06,0:35:18,0:47:35,1:02:50,3:11:44,2:10:20,,1 - M-410iC/185 (Robot Co,,01 on Robot Controller1').split(',').join('\n');

/* Latin runs are set in the fixed-pitch face, Chinese runs in the CJK face */
const mix = s => s.replace(/[\x21-\x7e]+/g, m => `<span class="lat">${m}</span>`);
const alarms = [['12:10:24','SRVO-171','电机速度极限/DVC(G:1'],['12:10:20','DIAG-005','减速器负载过大'],['12:10:20','','重置'],['12:10:18','','重置'],['12:10:16','','重置'],['12:10:16','SYST-040','操作模式AUTO已选择'],['12:10:16','SYST-043','在T1/T2模下,示教器禁用'],['12:9:58','','重置'],['12:9:58','','重置'],['12:9:58','SYST-039','操作模式T2已选择'],['12:9:58','SYST-042','安全开关失效'],['12:9:58','SYST-045','在AUTO模式下,示教器启用']];
$('alarms').innerHTML = alarms.map((a, i) => `<tr><td${i ? '' : ' class="sel"'}>${mix('2022年12月6日' + a[0])}</td><td>${mix(a[1])}</td><td>${mix(a[2])}</td></tr>`).join('');
const pose = [['X','-2022.837','Rz','180.000'],['Y','-42.809','Ry','0.000'],['Z','-578.308','Rx','91.819']];
const coords = [['世界','','',''],...pose,['关节','','',''],['J1','-178.788','J4','-89.394'],['J2','35.429','J5','0.000'],['J3','-58.922','J6','0.000'],['用户','','',''],...pose,['状态','','',''],['例程','PICK_TP','模式','AUTO'],['行号','6','状态','运行中'],['启动','RSR001','型号','M-410iC']];
$('coords').innerHTML = coords.map((r, i) => '<tr>' + r.map((c, j) => `<td class="${i === 9 && j === 1 ? 'sel' : (i === 13 || i === 14) && j === 3 ? 'go' : ''}">${mix(c)}</td>`).join('') + '</tr>').join('');

/* ground mesh of the 3D view */
let m = '<path d="M180 161L611 125"/><path d="M530 184L1233 125M1155 184L1389 164M180 994L412 975M546 1017L900 989"/>';
for (let i = 0; i < 14; i++) { const x = i < 5 ? 243 + i * 80 : 645 + (i - 5) * 81.6; const y = Math.max(125, 161 - (x - 180) * .0835); m += `<path d="M${x} ${y}L${249 + i * 81.6} 184"/>`; }
for (let i = 0; i < 8; i++) m += `<path d="M${249 + i * 81.5} 975l8 42"/>`;
$('mesh').innerHTML = m;

/* speed dial */
const C = [234, 235], pt = (r, v) => { const a = Math.PI * (1 - v / 100); return [C[0] + r * Math.cos(a), C[1] - r * Math.sin(a)]; };
const arc = (r, a, b) => `M${pt(r, a)}A${r} ${r} 0 0 1 ${pt(r, b)}`;
let d = `<g fill="none" stroke="#666"><path d="${arc(202, 0, 100)}"/><path d="${arc(67, 0, 100)}H407"/></g><g fill="none" stroke="#cc4a20" stroke-width="4" stroke-dasharray="14 3"><path d="${arc(207, 0, 20)}"/><path d="${arc(207, 80, 100)}"/></g>`;
for (let v = 0; v <= 100; v += 5) {
  const big = v % 10 === 0;
  d += `<path d="M${pt(202, v)}L${pt(big ? 195 : 199, v)}" stroke="#666" stroke-width="${big ? 3 : 1}"/>`;
  if (big) { const p = pt(186, v); d += `<text class="dial" dominant-baseline="central" transform="translate(${p}) rotate(${v * 1.8 - 90})">${v}</text>`; }
}
d += `<path d="M57 235L234 230a5 5 0 0 1 0 10z" fill="#ff634a"/><text class="dial" x="234" y="119" style="fill:#666">0</text>`;
$('dial').innerHTML = d;

/* torque chart */
const L = 212, R = 1199, Y0 = 929, YT = 681;
let t = '<g stroke="#666" fill="none">';
for (let i = 0; i <= 10; i++) { const y = Math.round(Y0 - i * 24.8) + .5; t += `<path d="M${L - 4} ${y}h4M${R} ${y}h4"/>` + (i ? `<path d="M${L} ${y}H${R}" stroke-dasharray="5 5"/>` : ''); }
for (let i = 1; i < 23; i++) t += `<path d="M${Math.round(L + i * (R - L) / 23) + .5} ${YT}V${Y0}" stroke-dasharray="6 5"/>`;
t += `<path d="M${L}.5 670V${Y0}M${R}.5 670V${Y0}M853 ${Y0}.5H${R}"/></g><path d="M${L}.5 665l4 8h-8zM${R}.5 665l4 8h-8z" fill="#666"/>`;
for (let i = 0; i <= 10; i++) { const y = Math.round(Y0 - i * 24.8) + 4; t += `<text class="axis" x="205" y="${y}" text-anchor="end">${i * 800}</text><text class="axis" x="1205" y="${y}">${i * 800}</text>`; }
for (let i = 0; i < 24; i++) t += `<text class="axis" x="${L + i * (R - L) / 23}" y="946" text-anchor="middle">12:10</text>`;
const series = {
 '#ffff66': '754,929 806,928 814,924 823,925 843,926 850,929',
 '#2f8a3a': '754,928 759,915 764,907 767,908 770,917 774,926 779,927 786,925 794,921 806,912 809,918 814,925 825,924 834,928 850,929',
 '#b0203a': '754,928 757,893 761,877 764,863 768,853 771,847 774,833 777,818 781,825 784,867 787,913 791,928 818,929 823,918 829,911 840,903 843,907 846,922 849,929',
 '#4f9bd4': '754,928 758,903 761,867 764,793 767,729 770,735 773,807 775,880 777,913 779,887 781,833 784,778 787,781 790,860 794,880 797,910 801,922 806,929 810,913 813,850 817,713 820,787 824,860 827,902 836,901 840,903 843,905 845,833 846,779 850,793 853,841'};
for (const c in series) t += `<polyline points="${series[c]}" fill="none" stroke="${c}" stroke-width="${c === '#ffff66' ? 2 : 1.2}"/>`;
$('torque').innerHTML = t;
</script>
</body>
</html>
